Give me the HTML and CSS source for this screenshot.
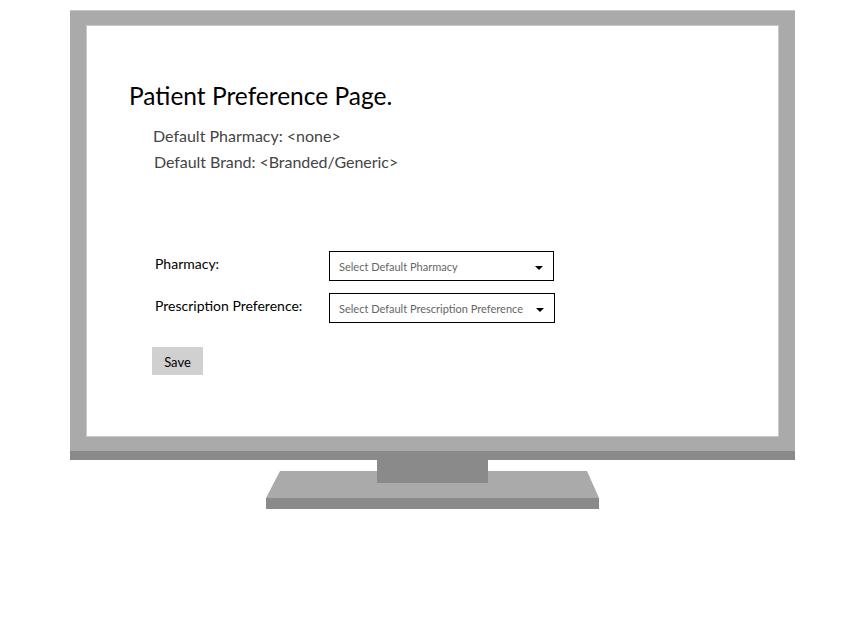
FILE: index.html
```html
<!DOCTYPE html>
<html lang="en">
<head>
    <meta charset="UTF-8">
    <title>Patient Preference Page</title>
    <link rel="stylesheet" href="styles.css">
</head>
<body>
    <!-- Monitor frame with the screen inside -->
    <div class="monitor">
        <div class="frame">
            <div class="screen">
                <h1 class="title">Patient Preference Page.</h1>
                <div class="defaults">
                    <p class="default-pharmacy">Default Pharmacy: &lt;none&gt;</p>
                    <p class="default-brand">Default Brand: &lt;Branded/Generic&gt;</p>
                </div>

                <!-- Preference form -->
                <div class="form">
                    <div class="row">
                        <span class="label">Pharmacy:</span>
                        <div class="select">
                            <span>Select Default Pharmacy</span>
                            <span class="caret"></span>
                        </div>
                    </div>
                    <div class="row">
                        <span class="label">Prescription Preference:</span>
                        <div class="select wide">
                            <span>Select Default Prescription Preference</span>
                            <span class="caret"></span>
                        </div>
                    </div>
                    <button class="save-btn">Save</button>
                </div>
            </div>
        </div>
        <div class="frame-bottom"></div>
        <div class="neck"></div>
        <div class="base-top"></div>
        <div class="base-bottom"></div>
    </div>
</body>
</html>
```

FILE: styles.css
```css
body {
    margin: 0;
    background-color: #fff;
    font-family: "Source Sans Pro", Lato, "Liberation Sans", sans-serif;
    color: #000;
}

.monitor {
    display: flex;
    flex-direction: column;
    align-items: center;
    width: 725px;
    margin: 10px 0 0 70px;
}

.frame {
    width: 725px;
    box-sizing: border-box;
    padding: 14px 16px 14px 16px;
    background-color: #aaa;
    border-top: 1px solid #c8c8c8;
}

.screen {
    height: 412px;
    box-sizing: border-box;
    background-color: #fff;
    border: 1px solid #c9c9c9;
    padding: 57px 0 0 42px;
}

.title {
    margin: 0;
    font-size: 24.5px;
    font-weight: normal;
    line-height: 26px;
}

.defaults {
    margin: 14px 0 0 24px;
    color: #444;
    font-size: 16px;
}

.defaults p {
    margin: 0;
    line-height: 26px;
}

.default-brand {
    padding-left: 1px;
    letter-spacing: -0.05px;
}

.form {
    display: flex;
    flex-direction: column;
    gap: 12px;
    margin: 76px 0 0 26px;
}

.row {
    display: flex;
    align-items: flex-start;
}

.label {
    width: 174px;
    font-size: 14px;
    line-height: 26px;
}

.select {
    width: 225px;
    height: 30px;
    box-sizing: border-box;
    border: 1px solid #000;
    display: flex;
    align-items: center;
    justify-content: space-between;
    padding: 0 10px 0 9px;
    font-size: 11px;
    color: #666;
}

.select.wide {
    width: 226px;
}

.caret {
    width: 0;
    height: 0;
    border-left: 4px solid transparent;
    border-right: 4px solid transparent;
    border-top: 4px solid #000;
    margin-top: 4px;
}

.save-btn {
    align-self: flex-start;
    margin: 12px 0 0 -3px;
    width: 51px;
    height: 28px;
    border: none;
    background-color: #d0d0d0;
    font-family: inherit;
    font-size: 13px;
    color: #000;
    padding: 2px 0 0 0;
}

.frame-bottom {
    width: 725px;
    height: 9px;
    background-color: #8a8a8a;
}

.neck {
    width: 111px;
    height: 23px;
    background-color: #8a8a8a;
    position: relative;
    z-index: 1;
}

.base-top {
    width: 333px;
    height: 27px;
    margin-top: -12px;
    background-color: #aaa;
    clip-path: polygon(14px 0, 321px 0, 333px 100%, 0 100%);
}

.base-bottom {
    width: 333px;
    height: 11px;
    background-color: #8a8a8a;
}
```
